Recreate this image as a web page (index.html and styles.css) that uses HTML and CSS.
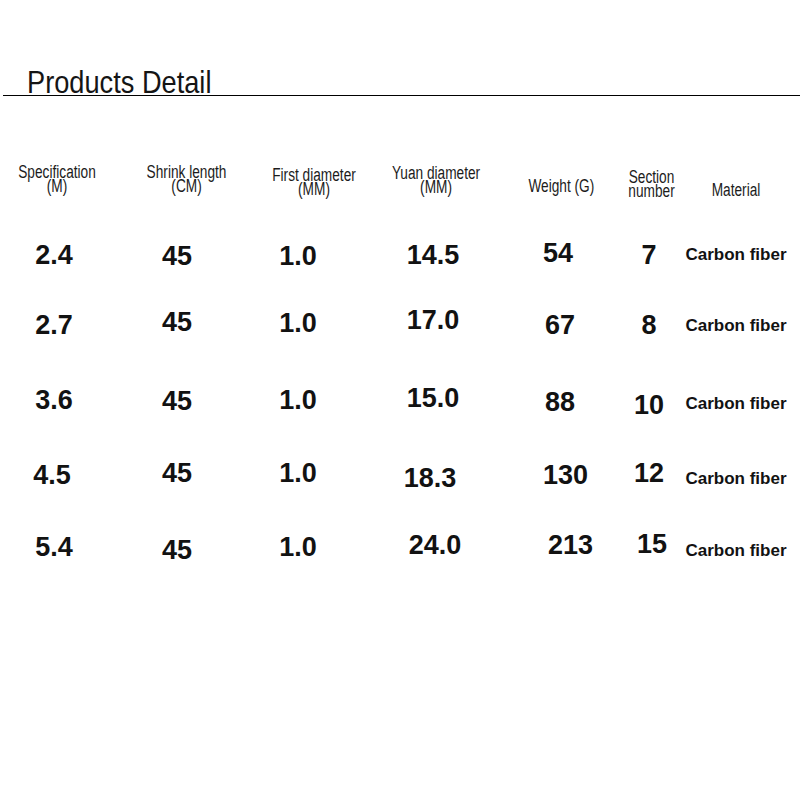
FILE: index.html
```html
<!DOCTYPE html>
<html>
<head>
<meta charset="utf-8">
<title>Products Detail</title>
<link rel="stylesheet" href="styles.css">
</head>
<body>
<div class="page">
  <div class="title-bar"><span class="title">Products Detail</span></div>

  <div class="head-row">
    <div class="hcell"><span class="htext">Specification<br>(M)</span></div>
    <div class="hcell"><span class="htext">Shrink length<br>(CM)</span></div>
    <div class="hcell d3"><span class="htext">First diameter<br>(MM)</span></div>
    <div class="hcell d1"><span class="htext">Yuan diameter<br>(MM)</span></div>
    <div class="hcell d14"><span class="htext">Weight (G)</span></div>
    <div class="hcell d5"><span class="htext">Section<br>number</span></div>
    <div class="hcell d18"><span class="htext">Material</span></div>
  </div>

  <div class="data">
    <div class="num">2.4</div>
    <div class="num d1">45</div>
    <div class="num d1">1.0</div>
    <div class="num">14.5</div>
    <div class="num w u2 l2">54</div>
    <div class="num">7</div>
    <div class="mat">Carbon fiber</div>

    <div class="num">2.7</div>
    <div class="num u3">45</div>
    <div class="num u2">1.0</div>
    <div class="num u5">17.0</div>
    <div class="num w">67</div>
    <div class="num">8</div>
    <div class="mat d1">Carbon fiber</div>

    <div class="num">3.6</div>
    <div class="num d1">45</div>
    <div class="num">1.0</div>
    <div class="num u2">15.0</div>
    <div class="num w d2">88</div>
    <div class="num d5">10</div>
    <div class="mat d4">Carbon fiber</div>

    <div class="num l2">4.5</div>
    <div class="num u2">45</div>
    <div class="num u2">1.0</div>
    <div class="num d3 l3">18.3</div>
    <div class="num w l2">130</div>
    <div class="num u2">12</div>
    <div class="mat d4">Carbon fiber</div>

    <div class="num">5.4</div>
    <div class="num d3">45</div>
    <div class="num">1.0</div>
    <div class="num u2 r2">24.0</div>
    <div class="num w u2 r3">213</div>
    <div class="num u3 r3">15</div>
    <div class="mat d4">Carbon fiber</div>
  </div>
</div>
</body>
</html>
```

FILE: styles.css
```css
html, body {
  margin: 0;
  padding: 0;
  background: #ffffff;
}

.page {
  width: 800px;
  height: 800px;
  font-family: "Liberation Sans", Arial, sans-serif;
  color: #111111;
  overflow: hidden;
}

.title-bar {
  margin-top: 69px;
  margin-left: 3px;
  padding-left: 24px;
  height: 26px;
  line-height: 26px;
  border-bottom: 1px solid #000000;
}

.title {
  display: inline-block;
  font-size: 32px;
  font-weight: normal;
  color: #151515;
  transform: scaleX(0.85);
  transform-origin: left center;
  white-space: nowrap;
}

.head-row,
.data {
  display: grid;
  justify-items: center;
  align-items: start;
}

.head-row {
  grid-template-columns: 114px 146px 108px 136px 114px 68px 100px;
  margin-top: 69px;
  height: 75px;
}

.hcell {
  display: flex;
  justify-content: center;
  width: 100%;
}

.htext {
  display: inline-block;
  font-size: 18px;
  line-height: 14px;
  text-align: center;
  white-space: nowrap;
  color: #1c1c1c;
  transform: scaleX(0.76);
  transform-origin: center top;
}

.data {
  grid-template-columns: 108px 138px 104px 166px 96px 74px 100px;
  grid-template-rows: 70px 75px 75px 72px 30px;
}

.num {
  font-size: 27px;
  font-weight: bold;
  line-height: 30px;
  white-space: nowrap;
  color: #121212;
}

.num.w {
  justify-self: start;
  padding-left: 29px;
}

.mat {
  display: flex;
  justify-content: center;
  width: 100%;
  font-size: 17px;
  font-weight: bold;
  line-height: 30px;
  white-space: nowrap;
  color: #121212;
}

/* small vertical nudges, as in the hand-set original */
.u2 { margin-top: -2px; }
.u3 { margin-top: -3px; }
.u5 { margin-top: -5px; }
.d1 { margin-top: 1px; }
.d2 { margin-top: 2px; }
.d3 { margin-top: 3px; }
.d4 { margin-top: 4px; }
.d5 { margin-top: 5px; }
.d14 { margin-top: 14px; }
.d18 { margin-top: 18px; }

/* small horizontal nudges */
.l2 { translate: -2px 0; }
.l3 { translate: -3px 0; }
.r2 { translate: 2px 0; }
.r3 { translate: 3px 0; }
```
